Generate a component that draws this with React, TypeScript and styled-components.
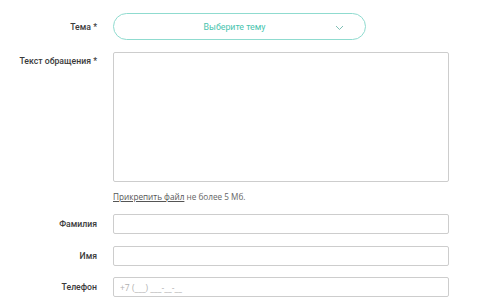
import styled, { createGlobalStyle } from "styled-components";

const Global = createGlobalStyle`
  html, body {
    margin: 0;
    padding: 0;
    background: #fff;
  }
  body {
    font-family: Roboto, "Liberation Sans", Arial, sans-serif;
    color: #333;
  }
`;

const Form = styled.form`
  display: flex;
  flex-direction: column;
  padding-top: 13px;
  width: 480px;
`;

const Row = styled.div<{ $top?: number; $alignTop?: boolean }>`
  display: grid;
  grid-template-columns: 97px 336px;
  column-gap: 16px;
  align-items: ${(p) => (p.$alignTop ? "start" : "center")};
  margin-top: ${(p) => p.$top ?? 0}px;
`;

const Label = styled.label<{ $pad?: number }>`
  text-align: right;
  font-size: 8.7px;
  font-weight: 500;
  color: #3a3a3a;
  white-space: nowrap;
  padding-top: ${(p) => p.$pad ?? 0}px;
`;

const Select = styled.div`
  position: relative;
  box-sizing: border-box;
  width: 253px;
  height: 27px;
  padding-right: 10px;
  border: 1px solid #8fdbcf;
  border-radius: 14px;
  display: flex;
  align-items: center;
  justify-content: center;
  font-size: 8.8px;
  color: #48c4ae;
`;

const Chevron = styled.svg`
  position: absolute;
  right: 21px;
  top: 11px;
`;

const TextArea = styled.textarea`
  box-sizing: border-box;
  width: 336px;
  height: 130px;
  border: 1px solid #cdcdcd;
  border-radius: 2px;
  resize: none;
  margin: 0;
  display: block;
`;

const Hint = styled.div`
  grid-column: 2;
  font-family: "Open Sans", "Liberation Sans", Arial, sans-serif;
  font-size: 8.2px;
  color: #666;
  line-height: 10px;
`;

const Link = styled.a`
  color: #555;
  text-decoration: underline;
`;

const Input = styled.input`
  box-sizing: border-box;
  width: 336px;
  height: 20px;
  border: 1px solid #cdcdcd;
  border-radius: 2px;
  margin: 0;
  padding: 0 6px;
  display: block;
  font-family: "Open Sans", "Liberation Sans", Arial, sans-serif;
  font-size: 8.5px;
  color: #333;
  &::placeholder {
    color: #b0b0b0;
  }
`;

export default function App() {
  return (
    <>
      <Global />
      <Form>
        <Row>
          <Label>Тема *</Label>
          <Select>
            Выберите тему
            <Chevron width="9" height="6" viewBox="0 0 9 6">
              <path d="M1 1l3.5 3.5L8 1" fill="none" stroke="#7fbfb5" strokeWidth="1" />
            </Chevron>
          </Select>
        </Row>
        <Row $top={12} $alignTop>
          <Label $pad={4}>Текст обращения *</Label>
          <TextArea />
        </Row>
        <Row $top={10}>
          <Hint>
            <Link>Прикрепить файл</Link> не более 5 Мб.
          </Hint>
        </Row>
        <Row $top={12}>
          <Label>Фамилия</Label>
          <Input />
        </Row>
        <Row $top={12}>
          <Label>Имя</Label>
          <Input />
        </Row>
        <Row $top={11}>
          <Label>Телефон</Label>
          <Input placeholder="+7 (___) ___-__-__" />
        </Row>
      </Form>
    </>
  );
}
